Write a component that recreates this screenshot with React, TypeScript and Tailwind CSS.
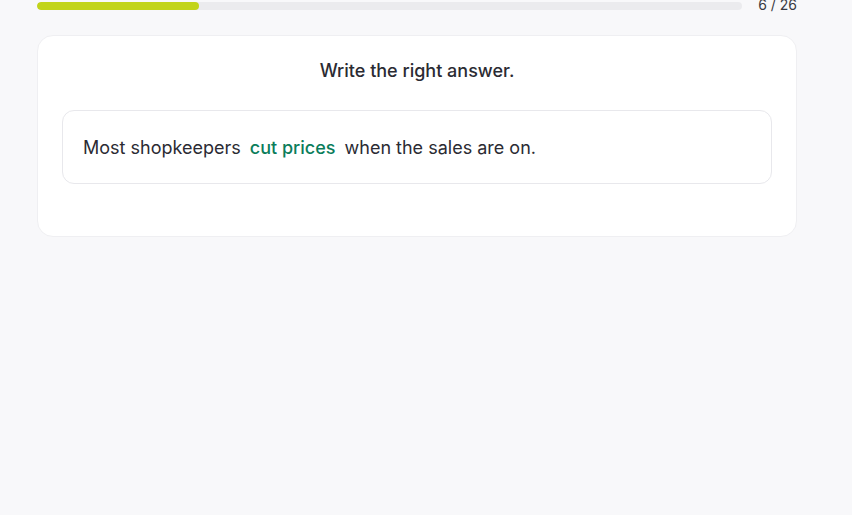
export default function App() {
  return (
    <div
      className="min-h-screen bg-[#f8f8fa] text-[#2b2b33]"
      style={{ fontFamily: "Inter, 'Noto Sans', sans-serif" }}
    >
      <div className="ml-[37px] w-[760px] pt-[2px]">
        {/* progress */}
        <div className="flex items-center gap-4 h-2">
          <div className="flex-1 h-2 rounded-full bg-[#ebebee] overflow-hidden">
            <div className="h-full w-[23%] rounded-full bg-[#c2d41a]" />
          </div>
          <span className="-mt-[2px] text-sm leading-none text-[#3a3a42]">6 / 26</span>
        </div>

        {/* question card */}
        <div className="mt-[25px] rounded-2xl border border-[#efeff2] bg-white px-6 pt-[23px] pb-[52px]">
          <h2 className="text-center text-lg leading-6 font-medium text-[#2b2b33]">
            Write the right answer.
          </h2>
          <div className="mt-[27px] rounded-xl border border-[#e8e8ec] px-5 pt-[23px] pb-[21px]">
            <p className="text-lg leading-7 text-[#2b2b33]">
              Most shopkeepers{" "}
              <span className="px-1 font-medium text-[#0b7d5b]">cut prices</span>{" "}
              when the sales are on.
            </p>
          </div>
        </div>
      </div>
    </div>
  );
}
